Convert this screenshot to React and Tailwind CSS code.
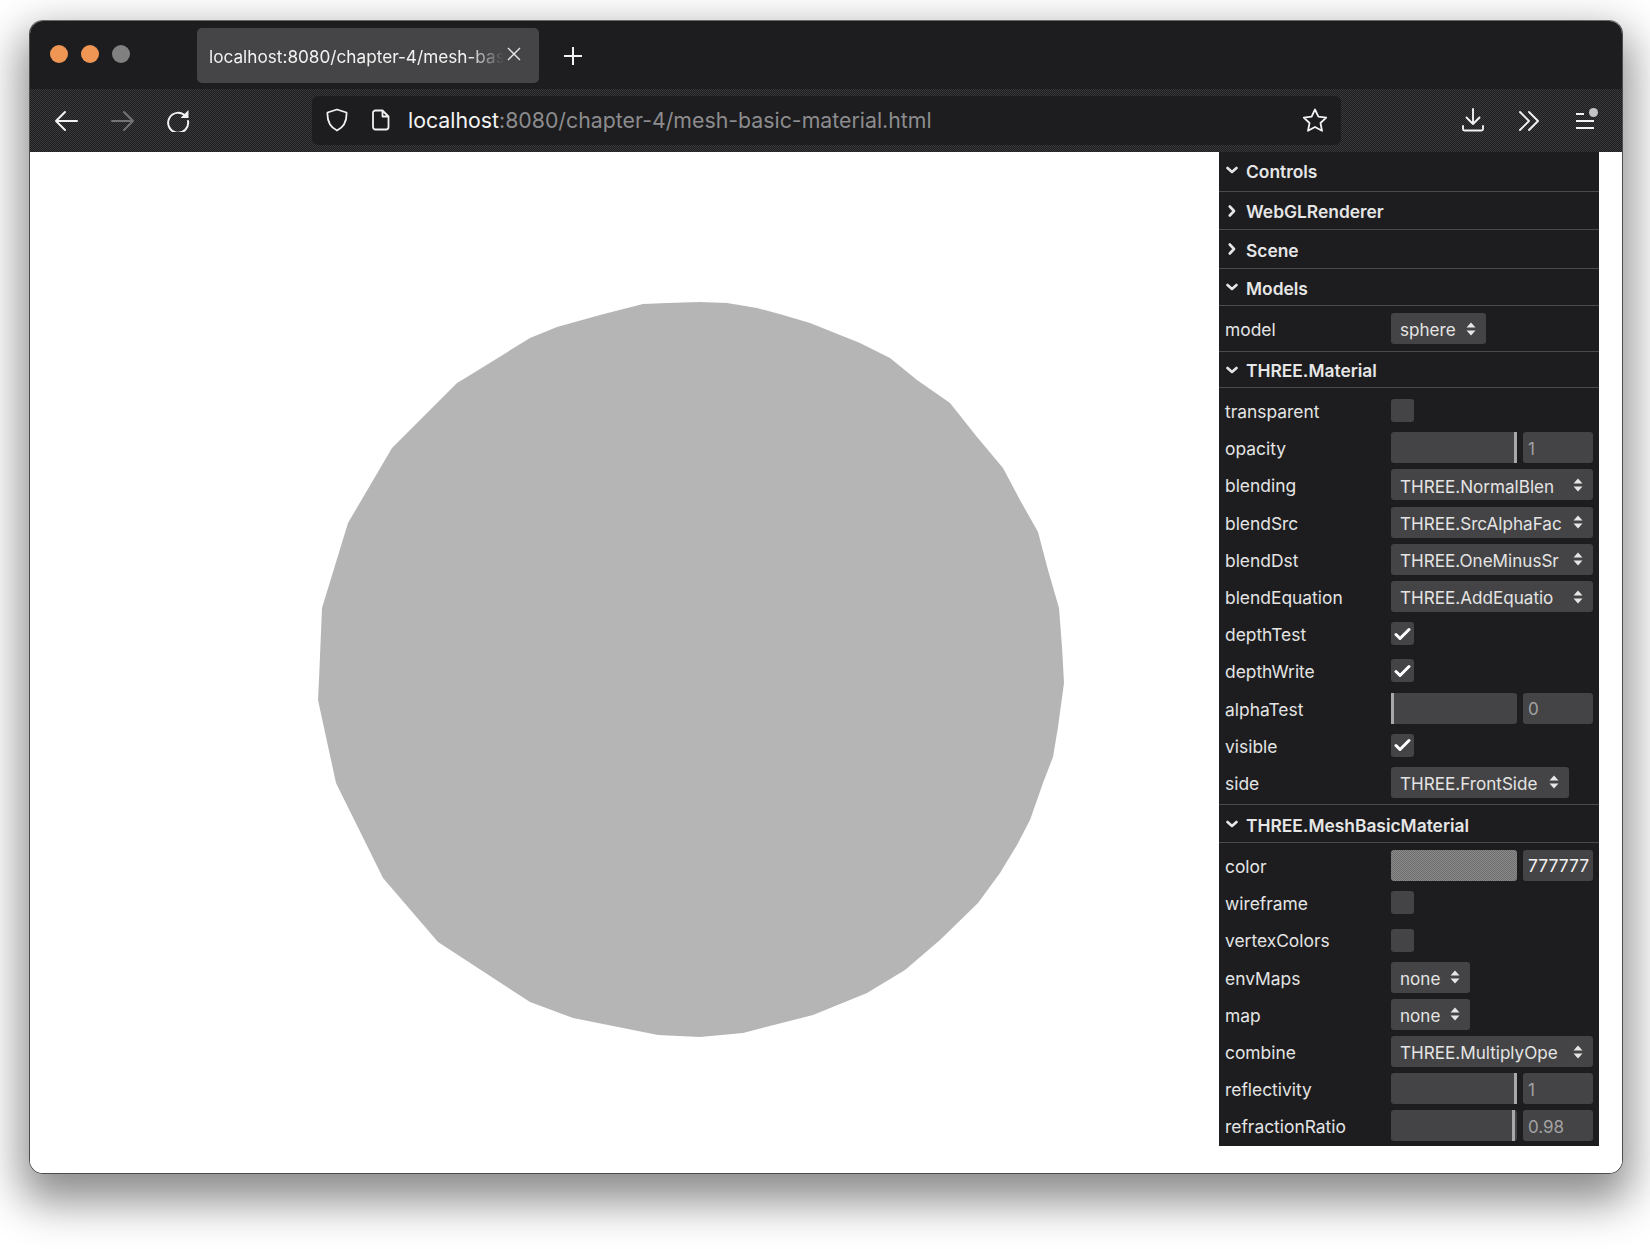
import React from 'react';

const circlePoints = "700,302 667,303 643,304 600,315 557,327 530,338 467,377 457,383 392,448 348,523 322,608 319,680 318,700 336,783 383,878 438,942 530,1002 573,1018 658,1035 700,1037 743,1033 813,1015 867,993 905,970 940,940 978,903 1000,873 1017,845 1030,820 1043,783 1053,757 1058,727 1064,683 1062,647 1059,608 1048,570 1038,532 1020,500 1003,468 977,437 950,403 917,380 890,358 860,343 810,323 783,315 757,308 727,303";

function Chevron({ open }) {
  return (
    <svg width="12" height="12" viewBox="0 0 12 12" fill="none" stroke="#e6e6e6" strokeWidth="2.6" strokeLinecap="round" strokeLinejoin="round">
      {open ? <polyline points="1.5,4 6,8 10.5,4" /> : <polyline points="3.8,1.5 8,6 3.8,10.5" />}
    </svg>
  );
}

function Header({ title, open = true, className }) {
  return (
    <div className={`flex items-center pl-[7px] border-b border-[#4a4a4c] text-[17.4px] font-semibold text-[#e6e6e6] ${className}`}>
      <span className="w-[12px] mr-[8px] flex"><Chevron open={open} /></span>
      <span className="pt-[4px]">{title}</span>
    </div>
  );
}

function Row({ label, children, className = 'h-[37.2px]' }) {
  return (
    <div className={`flex items-center pl-[6px] ${className}`}>
      <span className="w-[166px] pt-[3px] text-[17.4px] text-[#e4e4e4] whitespace-nowrap">{label}</span>
      {children}
    </div>
  );
}

function Arrows() {
  return (
    <svg width="10" height="14" viewBox="0 0 10 14" fill="#e6e6e6" className="shrink-0">
      <polygon points="5,0.5 9.5,5.5 0.5,5.5" />
      <polygon points="5,13.5 9.5,8.5 0.5,8.5" />
    </svg>
  );
}

function Select({ value, className = 'w-[202px]' }) {
  return (
    <div className={`h-[31px] flex items-center justify-between pl-[9px] pr-[10px] bg-[#444446] rounded-[3px] text-[17.1px] text-[#e4e4e4] overflow-hidden whitespace-nowrap ${className}`}>
      <span className="pt-[3px]">{value}</span>
      <Arrows />
    </div>
  );
}

function Check({ on = false }) {
  return (
    <div className="w-[23px] h-[23px] bg-[#444446] rounded-[3px] flex items-center justify-center">
      {on && (
        <svg width="17" height="14" viewBox="0 0 17 14" fill="none" stroke="#ffffff" strokeWidth="3" strokeLinecap="round" strokeLinejoin="round">
          <polyline points="2,7.5 6,11.5 15,2.5" />
        </svg>
      )}
    </div>
  );
}

function Slider({ value, handle }) {
  return (
    <div className="flex gap-[6px]">
      <div className={`w-[126px] h-[31px] bg-[#444446] rounded-[3px] flex ${handle}`}>
        <div className="w-[3px] h-full bg-[#a8a8a8]" />
      </div>
      <div className="w-[70px] h-[31px] pl-[5px] pt-[3px] flex items-center bg-[#444446] rounded-[3px] text-[17px] text-[#a2a2a2]">{value}</div>
    </div>
  );
}

export default function App() {
  return (
    <div className="w-[1650px] h-[1249px] bg-white pt-[20px] pl-[29px] overflow-hidden [font-family:Inter,sans-serif]">
      <div className="w-[1594px] h-[1154px] flex flex-col rounded-[14px] overflow-hidden border border-[#4c4c4c] border-t-[#6a6a6a] shadow-[0_20px_44px_8px_rgba(0,0,0,0.45)]">

        {/* Title bar */}
        <div className="h-[68px] shrink-0 bg-[#1d1d1f] flex items-start">
          <div className="flex gap-[13px] ml-[20px] mt-[24px]">
            <div className="w-[18px] h-[18px] rounded-full bg-[#ef9655]" />
            <div className="w-[18px] h-[18px] rounded-full bg-[#ef9655]" />
            <div className="w-[18px] h-[18px] rounded-full bg-[#808080]" />
          </div>
          <div className="w-[342px] h-[55px] ml-[67px] mt-[7px] pl-[12px] bg-[#454547] rounded-[5px] flex items-center">
            <span className="w-[295px] pt-[2px] whitespace-nowrap text-[17.2px] text-[#f2f2f2] [mask-image:linear-gradient(to_right,black_88%,transparent)]">localhost:8080/chapter-4/mesh-bas</span>
            <svg width="16" height="16" viewBox="0 0 16 16" stroke="#e6e6e6" strokeWidth="1.4" className="ml-[2px] -mt-[3px]">
              <path d="M2 2 L14 14 M14 2 L2 14" />
            </svg>
          </div>
          <svg width="22" height="22" viewBox="0 0 22 22" stroke="#f2f2f2" strokeWidth="2" className="ml-[23px] mt-[24px]">
            <path d="M11 2 V20 M2 11 H20" />
          </svg>
        </div>

        {/* Toolbar */}
        <div className="h-[63px] shrink-0 bg-[conic-gradient(#3a3a3c_25%,#1d1d1f_0_50%,#3a3a3c_0_75%,#1d1d1f_0)] bg-[length:2px_2px] flex items-center pl-[24px]">
          <svg width="24" height="24" viewBox="0 0 24 24" fill="none" stroke="#f2f2f2" strokeWidth="2" strokeLinecap="round" strokeLinejoin="round">
            <path d="M2 12 H23 M11 3 L2 12 L11 21" />
          </svg>
          <svg width="24" height="24" viewBox="0 0 24 24" fill="none" stroke="#737375" strokeWidth="2" strokeLinecap="round" strokeLinejoin="round" className="ml-[33px] mt-[1px]">
            <path d="M22 12 H1 M13 3 L22 12 L13 21" />
          </svg>
          <svg width="24" height="24" viewBox="0 0 24 24" fill="none" className="ml-[31px] -mt-[2px]">
            <path d="M19.5 8 A10 10 0 1 0 22 13" stroke="#f2f2f2" strokeWidth="2" strokeLinecap="round" />
            <polygon points="22.5,2 22.5,10 14.5,10" fill="#f2f2f2" />
          </svg>

          <div className="w-[1029px] h-[49px] ml-[122px] -mt-[1px] bg-[#1d1d1f] rounded-[6px] flex items-center pl-[14px] pr-[13px]">
            <svg width="22" height="24" viewBox="0 0 22 24" fill="none" stroke="#f2f2f2" strokeWidth="1.8" strokeLinejoin="round">
              <path d="M11 1.5 L20.5 4.5 C21 13 18 19 11 22.5 C4 19 1 13 1.5 4.5 Z" />
            </svg>
            <svg width="18" height="22" viewBox="0 0 18 22" fill="none" stroke="#f2f2f2" strokeWidth="1.8" strokeLinejoin="round" className="ml-[24px]">
              <path d="M3.5 1.5 H10.5 L16.5 7.5 V18 A2.5 2.5 0 0 1 14 20.5 H3.5 A2.5 2.5 0 0 1 1 18 V4 A2.5 2.5 0 0 1 3.5 1.5 Z M10.5 1.5 V7.5 H16.5" />
            </svg>
            <span className="ml-[18px] pt-[2px] text-[21.3px] text-[#8c8c8e] whitespace-nowrap"><span className="text-[#f4f4f4]">localhost</span>:8080/chapter-4/mesh-basic-material.html</span>
            <svg width="26" height="25" viewBox="0 0 26 25" fill="none" stroke="#f2f2f2" strokeWidth="1.8" strokeLinejoin="round" className="ml-auto mt-[1px]">
              <path d="M13 1.5 L16.4 8.6 L24.2 9.6 L18.5 15 L20 22.8 L13 19 L6 22.8 L7.5 15 L1.8 9.6 L9.6 8.6 Z" />
            </svg>
          </div>

          <svg width="24" height="24" viewBox="0 0 24 24" fill="none" stroke="#f2f2f2" strokeWidth="1.9" strokeLinecap="round" strokeLinejoin="round" className="ml-[120px] -mt-[1px]">
            <path d="M12 1 V16 M5.5 9.5 L12 16 L18.5 9.5 M2 18 V21 Q2 22.5 3.5 22.5 H20.5 Q22 22.5 22 21 V18" />
          </svg>
          <svg width="24" height="24" viewBox="0 0 24 24" fill="none" stroke="#f2f2f2" strokeWidth="1.9" strokeLinecap="round" strokeLinejoin="round" className="ml-[32px]">
            <path d="M3 3 L12 12 L3 21 M12 3 L21 12 L12 21" />
          </svg>
          <div className="relative w-[24px] h-[24px] ml-[32px]">
            <svg width="24" height="24" viewBox="0 0 24 24" stroke="#f2f2f2" strokeWidth="2">
              <path d="M3 5 H11 M3 12 H21 M3 19 H21" />
            </svg>
            <div className="absolute -top-[1px] right-[-1px] w-[9px] h-[9px] rounded-full bg-[#c4c4c4]" />
          </div>
        </div>

        {/* Page */}
        <div className="flex-1 bg-white flex items-start">
          <svg viewBox="30 152 1189 1021" className="w-[1189px] h-[1021px] shrink-0">
            <polygon points={circlePoints} fill="#b5b5b5" />
          </svg>

          {/* Controls panel */}
          <div className="w-[380px] h-[994px] shrink-0 bg-[#1d1d1f]">
            <Header title="Controls" className="h-[40px] pb-[3px]" />
            <Header title="WebGLRenderer" open={false} className="h-[38px]" />
            <Header title="Scene" open={false} className="h-[39px]" />
            <Header title="Models" className="h-[37px]" />
            <div className="border-b border-[#4a4a4c]">
              <Row label="model" className="h-[45px]"><Select value="sphere" className="w-[95px]" /></Row>
            </div>
            <Header title="THREE.Material" className="h-[36px]" />
            <div className="pt-[4px] pb-[3px] border-b border-[#4a4a4c]">
              <Row label="transparent"><Check /></Row>
              <Row label="opacity"><Slider value="1" handle="justify-end" /></Row>
              <Row label="blending"><Select value="THREE.NormalBlen" /></Row>
              <Row label="blendSrc"><Select value="THREE.SrcAlphaFac" /></Row>
              <Row label="blendDst"><Select value="THREE.OneMinusSr" /></Row>
              <Row label="blendEquation"><Select value="THREE.AddEquatio" /></Row>
              <Row label="depthTest"><Check on /></Row>
              <Row label="depthWrite"><Check on /></Row>
              <Row label="alphaTest"><Slider value="0" handle="justify-start" /></Row>
              <Row label="visible"><Check on /></Row>
              <Row label="side"><Select value="THREE.FrontSide" className="w-[178px]" /></Row>
            </div>
            <Header title="THREE.MeshBasicMaterial" className="h-[38px]" />
            <div className="pt-[4px]">
              <Row label="color">
                <div className="flex gap-[6px]">
                  <div className="w-[126px] h-[31px] bg-[conic-gradient(#6e6e6e_25%,#8a8a8a_0_50%,#6e6e6e_0_75%,#8a8a8a_0)] bg-[length:2px_2px] rounded-[3px]" />
                  <div className="w-[70px] h-[31px] pl-[5px] flex items-center bg-[#444446] rounded-[3px] text-[17.5px] text-[#f0f0f0]">777777</div>
                </div>
              </Row>
              <Row label="wireframe"><Check /></Row>
              <Row label="vertexColors"><Check /></Row>
              <Row label="envMaps"><Select value="none" className="w-[79px]" /></Row>
              <Row label="map"><Select value="none" className="w-[79px]" /></Row>
              <Row label="combine"><Select value="THREE.MultiplyOpe" /></Row>
              <Row label="reflectivity"><Slider value="1" handle="justify-end" /></Row>
              <Row label="refractionRatio"><Slider value="0.98" handle="justify-end pr-[2px]" /></Row>
            </div>
          </div>
        </div>
      </div>
    </div>
  );
}
